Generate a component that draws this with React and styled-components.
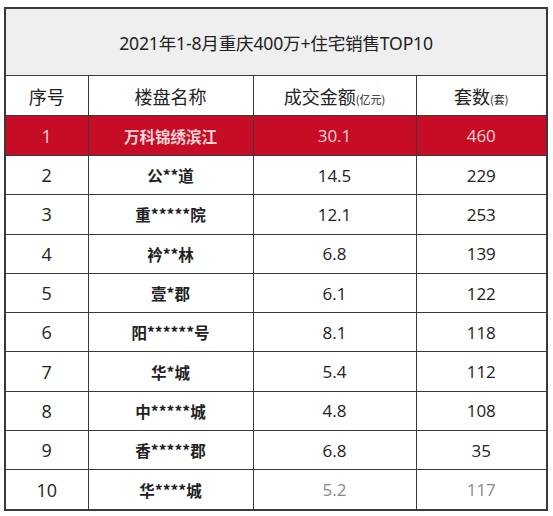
import React from "react";
import styled, { createGlobalStyle } from "styled-components";

const Global = createGlobalStyle`
  html, body { margin: 0; padding: 0; background: #ffffff; }
  body { font-family: "Noto Sans", "Noto Sans CJK SC", sans-serif; }
`;

const Page = styled.div`
  width: 553px;
  height: 516px;
  padding: 7px 0 0 4px;
  box-sizing: border-box;
  background: #fff;
`;

const Table = styled.table`
  border-collapse: collapse;
  width: 542px;
  table-layout: fixed;
  border: 2px solid #3a3a3a;
  color: #222;
`;

const TitleCell = styled.th`
  height: 66px;
  background: #efefef;
  border: 1px solid #3a3a3a;
  font-weight: 400;
  font-size: 17.6px;
  letter-spacing: -0.2px;
  text-align: center;
  padding: 0;
  font-family: "Noto Sans", "Noto Sans CJK SC", sans-serif;
`;

const HeadCell = styled.th`
  height: 39px;
  border: 1px solid #3a3a3a;
  font-weight: 400;
  font-size: 18px;
  text-align: center;
  padding: 0;
  font-family: "Noto Sans CJK SC", sans-serif;
`;

const Unit = styled.span`
  font-size: 11px;
`;

const Row = styled.tr`
  background: ${(p) => (p.$hl ? "#c60d25" : "#fff")};
  color: ${(p) => (p.$hl ? "#f6d3d7" : "#222")};
`;

const Cell = styled.td`
  height: ${(p) => (p.$first ? "39px" : "38.3px")};
  border: 1px solid #3a3a3a;
  text-align: center;
  padding: 0;
  font-size: ${(p) => (p.$seq ? "18px" : "17px")};
  font-family: "Open Sans", "Noto Sans CJK SC", sans-serif;
  font-weight: ${(p) => (p.$bold ? 700 : 400)};
  ${(p) => p.$bold && `font-family: "Noto Sans CJK SC", sans-serif; font-size: 15.5px;`}
  color: ${(p) => (p.$faded ? "#8a8a8a" : "inherit")};
`;

const rows = [
  ["1", "万科锦绣滨江", "30.1", "460"],
  ["2", "公**道", "14.5", "229"],
  ["3", "重*****院", "12.1", "253"],
  ["4", "衿**林", "6.8", "139"],
  ["5", "壹*郡", "6.1", "122"],
  ["6", "阳******号", "8.1", "118"],
  ["7", "华*城", "5.4", "112"],
  ["8", "中*****城", "4.8", "108"],
  ["9", "香*****郡", "6.8", "35"],
  ["10", "华****城", "5.2", "117"],
];

export default function App() {
  return (
    <Page>
      <Global />
      <Table>
        <colgroup>
          <col style={{ width: 83 }} />
          <col style={{ width: 165 }} />
          <col style={{ width: 163 }} />
          <col style={{ width: 131 }} />
        </colgroup>
        <thead>
          <tr>
            <TitleCell colSpan={4}>2021年1-8月重庆400万+住宅销售TOP10</TitleCell>
          </tr>
          <tr>
            <HeadCell>序号</HeadCell>
            <HeadCell>楼盘名称</HeadCell>
            <HeadCell>
              成交金额<Unit>(亿元)</Unit>
            </HeadCell>
            <HeadCell>
              套数<Unit>(套)</Unit>
            </HeadCell>
          </tr>
        </thead>
        <tbody>
          {rows.map((r, i) => (
            <Row key={r[0]} $hl={i === 0}>
              <Cell $first={i === 0} $seq>{r[0]}</Cell>
              <Cell $first={i === 0} $bold>{r[1]}</Cell>
              <Cell $first={i === 0} $faded={i === 9}>{r[2]}</Cell>
              <Cell $first={i === 0} $faded={i === 9}>{r[3]}</Cell>
            </Row>
          ))}
        </tbody>
      </Table>
    </Page>
  );
}
